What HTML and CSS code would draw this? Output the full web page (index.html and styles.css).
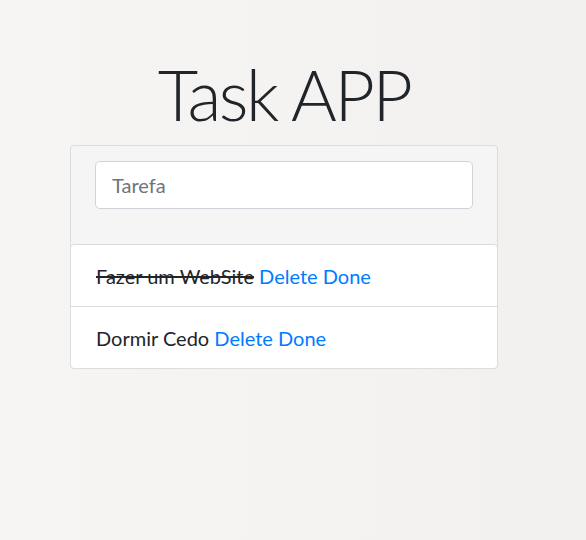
FILE: index.html
```html
<!DOCTYPE html>
<html lang="pt">
<head>
<meta charset="utf-8">
<title>Task APP</title>
<link rel="stylesheet" href="styles.css">
</head>
<body>
<main class="app">
  <h1 class="title">Task APP</h1>
  <section class="card">
    <div class="card-header">
      <input class="task-input" type="text" placeholder="Tarefa">
    </div>
    <ul class="task-list">
      <li class="task-item"><span class="task-text done">Fazer um WebSite</span> <a class="task-link" href="#">Delete</a> <a class="task-link" href="#">Done</a></li>
      <li class="task-item"><span class="task-text">Dormir Cedo</span> <a class="task-link" href="#">Delete</a> <a class="task-link" href="#">Done</a></li>
    </ul>
  </section>
</main>
</body>
</html>
```

FILE: styles.css
```css
html, body {
  margin: 0;
  padding: 0;
  height: 100%;
}
body {
  background: linear-gradient(90deg, #f6f5f4 0%, #f4f3f2 50%, #f1f0ef 100%);
  font-family: Lato, "Open Sans", sans-serif;
  color: #212529;
}
.app {
  padding: 51px 0 0 70px;
  width: 428px;
}
.title {
  margin: 0 0 8px 0;
  font-family: Lato, "Open Sans", sans-serif;
  font-weight: 300;
  font-size: 70px;
  line-height: 86px;
  letter-spacing: -2.5px;
  text-align: center;
  color: #212529;
}
.card {
  border: 1px solid #dcdcdc;
  border-radius: 4px;
  background: #f5f5f5;
}
.card-header {
  padding: 15px 24px 35px;
}
.task-input {
  display: block;
  box-sizing: border-box;
  width: 100%;
  height: 48px;
  padding: 0 16px;
  border: 1px solid #ced4da;
  border-radius: 5px;
  background: #fff;
  font-family: inherit;
  font-size: 20px;
  color: #495057;
  outline: none;
}
.task-input::placeholder {
  color: #6c757d;
}
.task-list {
  list-style: none;
  margin: 0;
  padding: 0;
  background: #fff;
  border: 1px solid #dcdcdc;
  border-radius: 4px;
  margin: 0 -1px -1px;
}
.task-item {
  padding: 16px 25px 15px;
  font-size: 20px;
  line-height: 30px;
}
.task-item + .task-item {
  border-top: 1px solid #dcdcdc;
}
.task-text.done {
  text-decoration: line-through;
  text-decoration-thickness: 2px;
}
.task-link {
  color: #007bff;
  text-decoration: none;
}
```
